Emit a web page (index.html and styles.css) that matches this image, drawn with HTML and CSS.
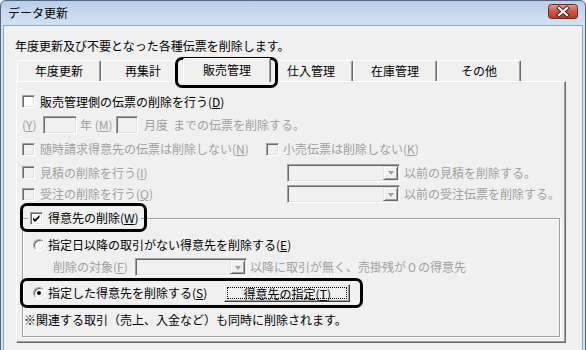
FILE: index.html
```html
<!DOCTYPE html>
<html>
<head>
    <meta charset="utf-8">
    <title>データ更新</title>
    <link rel="stylesheet" href="styles.css">
</head>
<body>

<div class="Window">
    <div class="TitleBar">
        <span class="TitleText">データ更新</span>
        <span class="CloseButton">
            <svg width="30" height="15" viewBox="0 0 30 15">
                <defs>
                    <linearGradient id="redGrad" x1="0" y1="0" x2="0" y2="1">
                        <stop offset="0" stop-color="#e3a194"/>
                        <stop offset="0.45" stop-color="#cc5b4c"/>
                        <stop offset="1" stop-color="#b7382a"/>
                    </linearGradient>
                </defs>
                <rect x="0.5" y="0.5" width="29" height="14" rx="3" fill="url(#redGrad)" stroke="#6b2820"/>
                <path d="M11 4 L19 11 M19 4 L11 11" stroke="#4a1a14" stroke-width="4" stroke-linecap="square"/>
                <path d="M11 4 L19 11 M19 4 L11 11" stroke="#ffffff" stroke-width="2.2" stroke-linecap="square"/>
            </svg>
        </span>
    </div>

    <div class="Client">
        <div class="Intro">年度更新及び不要となった各種伝票を削除します。</div>

        <div class="TabRow">
            <div class="Tab FirstTab">年度更新</div>
            <div class="Tab">再集計</div>
            <div class="Tab SelectedTab">販売管理</div>
            <div class="Tab">仕入管理</div>
            <div class="Tab">在庫管理</div>
            <div class="Tab">その他</div>
        </div>

        <div class="Pane">
            <div class="Row Row1">
                <span class="CheckBox"></span>
                <span class="Label">販売管理側の伝票の削除を行う(<u>D</u>)</span>
            </div>

            <div class="Row Row2 Disabled">
                <span class="YearLabel">(<u>Y</u>)</span>
                <span class="TextBox YearBox"></span>
                <span class="MonthLabel">年 (<u>M</u>)</span>
                <span class="TextBox MonthBox"></span>
                <span class="Suffix">月度</span>
                <span class="Suffix2">までの伝票を削除する。</span>
            </div>

            <div class="Row Row3 Disabled">
                <span class="Option WideOption">
                    <span class="CheckBox Off"></span>
                    <span class="Label">随時請求得意先の伝票は削除しない(<u>N</u>)</span>
                </span>
                <span class="Option">
                    <span class="CheckBox Off"></span>
                    <span class="LabelNear">小売伝票は削除しない(<u>K</u>)</span>
                </span>
            </div>

            <div class="Row Row4 Disabled">
                <span class="Option ComboOption">
                    <span class="CheckBox Off"></span>
                    <span class="Label">見積の削除を行う(<u>I</u>)</span>
                </span>
                <span class="Combo">
                    <span class="ComboButton"><span class="Arrow"></span></span>
                </span>
                <span class="AfterCombo">以前の見積を削除する。</span>
            </div>

            <div class="Row Row5 Disabled">
                <span class="Option ComboOption">
                    <span class="CheckBox Off"></span>
                    <span class="Label">受注の削除を行う(<u>Q</u>)</span>
                </span>
                <span class="Combo">
                    <span class="ComboButton"><span class="Arrow"></span></span>
                </span>
                <span class="AfterCombo">以前の受注伝票を削除する。</span>
            </div>

            <fieldset class="Group">
                <legend class="GroupTitle">
                    <span class="CheckBox">
                        <svg width="11" height="11" viewBox="0 0 11 11">
                            <path d="M2 4.5 L4 6.5 L8.5 2 L8.5 4.5 L4 9 L2 7 Z" fill="#000"/>
                        </svg>
                    </span>
                    <span class="Label">得意先の削除(<u>W</u>)</span>
                </legend>

                <div class="Row RadioRow1">
                    <span class="Radio"></span>
                    <span class="RadioLabel">指定日以降の取引がない得意先を削除する(<u>E</u>)</span>
                </div>

                <div class="Row TargetRow Disabled">
                    <span class="TargetLabel">削除の対象(<u>F</u>)</span>
                    <span class="Combo TargetCombo">
                        <span class="ComboButton"><span class="Arrow"></span></span>
                    </span>
                    <span class="TargetText">以降に取引が無く、売掛残が０の得意先</span>
                </div>

                <div class="Row RadioRow2">
                    <span class="Radio Checked"></span>
                    <span class="RadioLabel">指定した得意先を削除する(<u>S</u>)</span>
                    <span class="PushButton">
                        <span class="FocusRect">得意先の指定(<u>T</u>)</span>
                    </span>
                </div>

                <div class="Row NoteRow">※関連する取引（売上、入金など）も同時に削除されます。</div>
            </fieldset>
        </div>

        <!-- annotation marks drawn over the dialog -->
        <div class="Mark MarkTab"></div>
        <div class="Mark MarkGroup"></div>
        <div class="Mark MarkButton"></div>
    </div>
</div>

</body>
</html>
```

FILE: styles.css
```css
body {
    margin: 0;
    font-family: "Noto Sans CJK JP", "Noto Sans", sans-serif;
    font-size: 12px;
    line-height: 16px;
    color: #000;
    background: #f0f0f0;
    overflow: hidden;
}

.Window {
    width: 586px;
    height: 360px;
    box-sizing: border-box;
    border: 1px solid #55667c;
    border-radius: 6px 6px 0 0;
    background: linear-gradient(#b9d0e9, #d3e2f3 24px, #d3e2f3);
    padding: 0 2px;
}

.TitleBar {
    height: 24px;
    display: flex;
    align-items: center;
    justify-content: space-between;
    padding-left: 5px;
}

.TitleText {
    font-size: 12px;
}

.CloseButton {
    display: flex;
    margin-right: 5px;
    margin-top: -3px;
}

.Client {
    position: relative;
    height: 340px;
    background: #f0f0f0;
    border: 1px solid #8fa6bf;
    border-bottom: none;
}

.Intro {
    margin: 12px 0 0 11px;
}

/* tabs */

.TabRow {
    display: flex;
    align-items: flex-end;
    height: 21px;
    margin: 6px 0 0 12px;
}

.Tab {
    width: 84px;
    height: 21px;
    box-sizing: border-box;
    border-top: 1px solid #fff;
    border-left: 1px solid #fff;
    border-right: 1px solid #696969;
    border-radius: 2px 2px 0 0;
    box-shadow: inset -1px 0 0 #a0a0a0;
    text-align: center;
    line-height: 20px;
}

.FirstTab {
    margin-left: 1px;
}

.SelectedTab {
    position: relative;
    z-index: 1;
    width: 88px;
    height: 24px;
    margin: 0 -2px -1px -2px;
    background: #f0f0f0;
    line-height: 22px;
}

.Pane {
    width: 550px;
    height: 262px;
    box-sizing: border-box;
    margin-left: 12px;
    border-top: 1px solid #fff;
    border-left: 1px solid #fff;
    border-right: 1px solid #696969;
    border-bottom: 1px solid #696969;
    box-shadow: inset -1px -1px 0 #a0a0a0;
    padding: 8px 0 0 5px;
}

/* rows */

.Row {
    display: flex;
    align-items: center;
}

.Row1 { height: 23px; }
.Row2 { height: 24px; }
.Row3 { height: 24px; }
.Row4 { height: 23px; }
.Row5 { height: 20px; }

.Disabled {
    color: #a0a0a0;
}

.Label {
    margin-left: 5px;
    white-space: nowrap;
}

.LabelNear {
    margin-left: 4px;
    white-space: nowrap;
}

.Option {
    display: flex;
    align-items: center;
}

.WideOption {
    width: 244px;
}

.ComboOption {
    width: 265px;
}

.CheckBox {
    flex: none;
    display: flex;
    align-items: center;
    justify-content: center;
    width: 13px;
    height: 13px;
    box-sizing: border-box;
    border: 1px solid;
    border-color: #a0a0a0 #fff #fff #a0a0a0;
    box-shadow: inset 1px 1px 0 #696969, inset -1px -1px 0 #e3e3e3;
    background: #fff;
}

.CheckBox.Off {
    background: #f0f0f0;
}

.TextBox {
    flex: none;
    height: 18px;
    box-sizing: border-box;
    border: 1px solid;
    border-color: #a0a0a0 #fff #fff #a0a0a0;
    box-shadow: inset 1px 1px 0 #696969, inset -1px -1px 0 #e3e3e3;
    background: #f0f0f0;
}

.YearLabel {
    width: 21px;
}

.YearBox {
    width: 34px;
}

.MonthLabel {
    width: 33px;
    margin-left: 3px;
    white-space: nowrap;
}

.MonthBox {
    width: 22px;
    margin-left: 3px;
}

.Suffix {
    margin-left: 6px;
}

.Suffix2 {
    margin-left: 5px;
}

/* combo box */

.Combo {
    flex: none;
    display: flex;
    justify-content: flex-end;
    width: 113px;
    height: 18px;
    box-sizing: border-box;
    padding: 1px;
    border: 1px solid;
    border-color: #a0a0a0 #fff #fff #a0a0a0;
    box-shadow: inset 1px 1px 0 #696969, inset -1px -1px 0 #e3e3e3;
    background: #f0f0f0;
}

.ComboButton {
    display: flex;
    align-items: center;
    justify-content: center;
    width: 15px;
    box-sizing: border-box;
    border: 1px solid;
    border-color: #e3e3e3 #696969 #696969 #e3e3e3;
    box-shadow: inset 1px 1px 0 #fff, inset -1px -1px 0 #a0a0a0;
}

.Arrow {
    width: 0;
    height: 0;
    border-left: 3px solid transparent;
    border-right: 3px solid transparent;
    border-top: 4px solid #a0a0a0;
    margin-top: 1px;
}

.AfterCombo {
    margin-left: 4px;
    white-space: nowrap;
}

/* group box */

.Group {
    width: 538px;
    box-sizing: border-box;
    margin: 6px 0 0 0;
    padding: 0 0 6px 5px;
    border: 1px solid #a0a0a0;
    box-shadow: 1px 1px 0 #fff, inset 1px 1px 0 #fff;
}

.GroupTitle {
    display: flex;
    align-items: center;
    height: 16px;
    padding: 0 2px;
    background: #f0f0f0;
}

.RadioRow1 {
    height: 20px;
    margin-top: 9px;
}

.TargetRow {
    height: 20px;
    margin-top: 2px;
}

.RadioRow2 {
    height: 20px;
    margin-top: 6px;
}

.NoteRow {
    height: 20px;
    margin: 7px 0 0 -4px;
}

.Radio {
    flex: none;
    width: 12px;
    height: 12px;
    box-sizing: border-box;
    margin-left: 5px;
    border: 1px solid;
    border-color: #a0a0a0 #fff #fff #a0a0a0;
    border-radius: 50%;
    box-shadow: inset 1px 1px 0 #696969, inset -1px -1px 0 #e3e3e3;
    background: #fff;
    display: flex;
    align-items: center;
    justify-content: center;
}

.Radio.Checked::after {
    content: "";
    width: 4px;
    height: 4px;
    border-radius: 50%;
    background: #000;
}

.RadioLabel {
    margin-left: 3px;
    white-space: nowrap;
}

.TargetLabel {
    margin-left: 25px;
    width: 82px;
    white-space: nowrap;
}

.TargetCombo {
    width: 112px;
}

.TargetText {
    margin-left: 3px;
    white-space: nowrap;
}

.PushButton {
    flex: none;
    display: flex;
    width: 126px;
    height: 18px;
    box-sizing: border-box;
    margin-left: 17px;
    padding: 2px;
    border: 1px solid;
    border-color: #fff #404040 #404040 #fff;
    box-shadow: inset -1px -1px 0 #a0a0a0, inset 1px 1px 0 #e3e3e3;
    background: #f0f0f0;
}

.FocusRect {
    flex: 1;
    border: 1px dotted #000;
    text-align: center;
    line-height: 11px;
    white-space: nowrap;
}

/* black annotation frames */

.Mark {
    position: absolute;
    box-sizing: border-box;
    border: 3px solid #000;
    border-radius: 7px;
}

.MarkTab {
    left: 171px;
    top: 31px;
    width: 103px;
    height: 31px;
}

.MarkGroup {
    left: 16px;
    top: 177px;
    width: 127px;
    height: 29px;
}

.MarkButton {
    left: 16px;
    top: 252px;
    width: 343px;
    height: 30px;
}
```
